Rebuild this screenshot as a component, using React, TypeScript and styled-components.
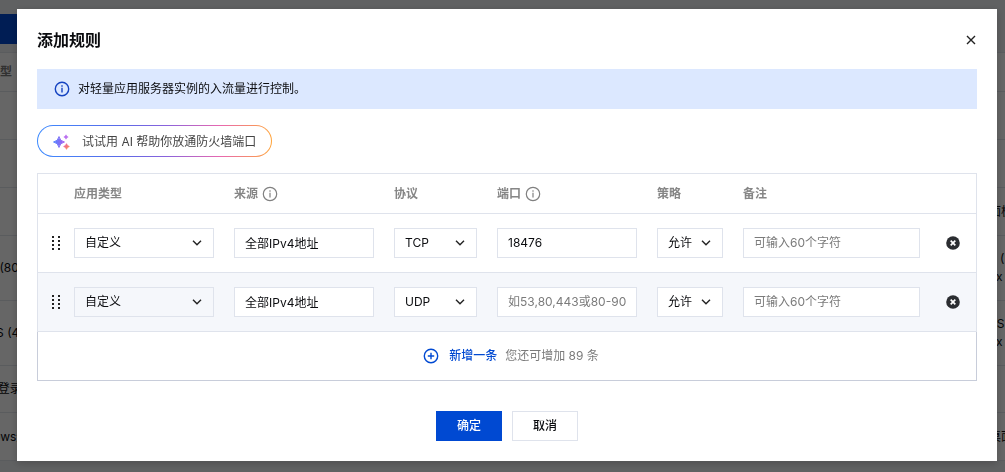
import React from 'react';
import styled, { createGlobalStyle, css } from 'styled-components';

const GlobalStyle = createGlobalStyle`
  *, *::before, *::after { box-sizing: border-box; }
  html, body, #root { height: 100%; }
  body {
    margin: 0;
    overflow: hidden;
    font-family: Inter, "Noto Sans CJK SC", sans-serif;
    font-size: 12px;
    line-height: 18px;
    color: #0b0c0f;
    background: #f0f2f5;
  }
  button, input, select { font: inherit; color: inherit; margin: 0; }
`;

/* ---------- page behind the dialog ---------- */

const Page = styled.div`
  height: 100%;
  overflow: hidden;
  padding-top: 14px;
`;

const PageToolbar = styled.div`
  display: flex;
  margin-bottom: 8px;
`;

const PageButton = styled.button`
  width: 80px;
  height: 30px;
  border: 0;
  background: #0049d2;
`;

const PageTable = styled.table`
  width: calc(100% + 36px);
  margin-left: -36px;
  table-layout: fixed;
  border-collapse: separate;
  border-spacing: 0;
  background: #fff;
`;

const PageCell = styled.td<{ $h: number }>`
  height: ${({ $h }) => $h}px;
  padding: 0;
  border-bottom: 1px solid #e2e5ec;
  vertical-align: middle;
  white-space: pre;
`;

const PageHead = styled.th`
  height: 40px;
  padding: 0;
  border-top: 1px solid #e2e5ec;
  border-bottom: 1px solid #e2e5ec;
  text-align: left;
  font-weight: 700;
  color: #7a7a7a;
`;

const PageLastCol = styled.col`
  width: 16px;
`;

/* ---------- dialog ---------- */

const Backdrop = styled.div`
  position: fixed;
  inset: 0;
  padding: 9px 8px 11px 17px;
  background: rgba(0, 0, 0, 0.6);
`;

const Dialog = styled.section`
  padding: 20px;
  background: #fff;
  box-shadow: 0 2px 8px rgba(0, 0, 0, 0.2);
`;

const DialogHeader = styled.header`
  display: flex;
  align-items: center;
  justify-content: space-between;
  height: 22px;
  margin-bottom: 18px;
`;

const Title = styled.h1`
  margin: 0;
  font-size: 16px;
  line-height: 22px;
  font-weight: 700;
`;

const IconButton = styled.button`
  display: inline-flex;
  align-items: center;
  justify-content: center;
  padding: 0;
  border: 0;
  background: none;
  cursor: pointer;
`;

const Notice = styled.div`
  display: flex;
  align-items: center;
  gap: 8px;
  height: 40px;
  padding: 0 17px;
  background: #dce8ff;
`;

const AiButton = styled.button`
  display: flex;
  align-items: center;
  gap: 12px;
  height: 32px;
  margin: 16px 0;
  padding: 1px 15px 0;
  border: 1px solid transparent;
  border-radius: 16px;
  background:
    linear-gradient(#fff, #fff) padding-box,
    linear-gradient(90deg, #3d8bff 0%, #5a6ae8 35%, #8a63dc 55%, #e868b0 78%, #ffa63d 100%) border-box;
  color: #444;
  cursor: pointer;
`;

const RuleTable = styled.table`
  width: 100%;
  table-layout: fixed;
  border-collapse: separate;
  border-spacing: 0;
  border: 1px solid #dfe3ec;
  border-bottom: 0;
`;

const Col = styled.col<{ $w?: number }>`
  ${({ $w }) => $w && css`width: ${$w}px;`}
`;

const HeadCell = styled.th`
  height: 40px;
  padding: 0 10px;
  border-bottom: 1px solid #dfe3ec;
  text-align: left;
  font-weight: 700;
  color: #868686;
`;

const HeadLabel = styled.span`
  display: flex;
  align-items: center;
  gap: 4px;
`;

const Row = styled.tr<{ $active?: boolean }>`
  background: ${({ $active }) => ($active ? '#f5f7fb' : '#fff')};
`;

const Cell = styled.td<{ $icon?: boolean }>`
  height: 59px;
  padding: ${({ $icon }) => ($icon ? '0' : '0 10px')};
  border-bottom: 1px solid #dfe3ec;
  vertical-align: middle;
`;

const DragButton = styled(IconButton)`
  display: flex;
  width: 100%;
  padding-left: 10px;
  cursor: move;
`;

const RemoveButton = styled(IconButton)`
  display: flex;
  width: 100%;
`;

const field = css`
  display: block;
  width: 100%;
  height: 30px;
  padding: 0 10px;
  border: 1px solid #dfe3ec;
  border-radius: 0;
  outline: 0;
`;

const TextInput = styled.input`
  ${field}
  padding-bottom: 2px;
  background: #fff;
  &::placeholder { color: #7b7b7b; opacity: 1; }
`;

const SelectBox = styled.div`
  position: relative;
`;

const SelectInput = styled.select<{ $plain?: boolean }>`
  ${field}
  appearance: none;
  background: ${({ $plain }) => ($plain ? 'transparent' : '#fff')};
`;

const SelectArrow = styled.span`
  position: absolute;
  top: 0;
  right: 11px;
  height: 30px;
  display: flex;
  align-items: center;
  pointer-events: none;
`;

const AddBar = styled.div`
  display: flex;
  align-items: center;
  justify-content: center;
  gap: 8px;
  height: 49px;
  padding-left: 8px;
  border: 1px solid #c8cdda;
  border-top: 0;
`;

const AddButton = styled(IconButton)`
  gap: 10px;
  color: #0049d2;
  font-weight: 500;
`;

const Hint = styled.span`
  color: #7b7b7b;
`;

const DialogFooter = styled.footer`
  display: flex;
  justify-content: center;
  gap: 10px;
  padding-top: 30px;
`;

const Button = styled.button<{ $primary?: boolean }>`
  min-width: 66px;
  height: 30px;
  padding: 0 20px;
  border: 1px solid ${({ $primary }) => ($primary ? '#0049d2' : '#dfe3ec')};
  background: ${({ $primary }) => ($primary ? '#0049d2' : '#fff')};
  color: ${({ $primary }) => ($primary ? '#fff' : '#0b0c0f')};
  font-weight: 500;
  cursor: pointer;
`;

/* ---------- icons ---------- */

const InfoIcon = ({ color, weight = 1.3 }: { color: string; weight?: number }) => (
  <svg width="16" height="16" viewBox="0 0 16 16" fill="none" stroke={color} strokeWidth={weight} aria-hidden="true">
    <circle cx="8" cy="8" r="6.7" />
    <path d="M8 6.8v4.6M8 4.3v1.5" />
  </svg>
);

const CloseIcon = () => (
  <svg width="12" height="12" viewBox="0 0 12 12" fill="none" stroke="#222" strokeWidth="1.4" aria-hidden="true">
    <path d="M2 2l8 8M10 2l-8 8" />
  </svg>
);

const Chevron = () => (
  <svg width="12" height="12" viewBox="0 0 12 12" fill="none" stroke="#222" strokeWidth="1.4" aria-hidden="true">
    <path d="M2 3.700l4 4 4-4" />
  </svg>
);

const DragIcon = () => (
  <svg width="8" height="14" viewBox="0 0 8 14" fill="#222" aria-hidden="true">
    {[0, 4, 8, 12].map((y) => (
      <g key={y}>
        <rect x="0" y={y} width="2" height="2" />
        <rect x="6" y={y} width="2" height="2" />
      </g>
    ))}
  </svg>
);

const RemoveIcon = () => (
  <svg width="14" height="14" viewBox="0 0 14 14" aria-hidden="true">
    <circle cx="7" cy="7" r="6.800" fill="#2b2d31" />
    <path d="M4.700 4.700l4.600 4.600M9.300 4.700L4.700 9.300" stroke="#fff" strokeWidth="1.700" />
  </svg>
);

const PlusIcon = () => (
  <svg width="16" height="16" viewBox="0 0 16 16" fill="none" stroke="#0049d2" strokeWidth="1.4" aria-hidden="true">
    <circle cx="8" cy="8" r="6.700" />
    <path d="M8 4.800v6.400M4.800 8h6.400" />
  </svg>
);

const SparkIcon = () => (
  <svg width="17" height="16" viewBox="0 0 17 16" aria-hidden="true">
    <defs>
      <linearGradient id="sparkMain" x1="0" y1="0" x2="1" y2="0">
        <stop offset="0" stopColor="#4f82ff" />
        <stop offset="1" stopColor="#a860f0" />
      </linearGradient>
      <linearGradient id="sparkLow" x1="0" y1="0" x2="1" y2="1">
        <stop offset="0" stopColor="#e860b0" />
        <stop offset="1" stopColor="#ff9048" />
      </linearGradient>
    </defs>
    <path d="M6 2.500Q6.900 7.100 11.500 8Q6.900 8.900 6 13.500Q5.100 8.900 .5 8Q5.100 7.100 6 2.500z" fill="url(#sparkMain)" stroke="url(#sparkMain)" strokeWidth=".9" strokeLinejoin="round" />
    <path d="M13 .8Q13.400 2.600 15.200 3Q13.400 3.400 13 5.200Q12.600 3.400 10.800 3Q12.600 2.600 13 .8z" fill="#b566ee" stroke="#b566ee" strokeWidth=".5" />
    <path d="M13.500 9.700Q14 12 16.300 12.500Q14 13 13.500 15.300Q13 13 10.700 12.500Q13 12 13.500 9.700z" fill="url(#sparkLow)" stroke="url(#sparkLow)" strokeWidth=".9" />
  </svg>
);

/* ---------- content ---------- */

const pageRows = [
  { h: 48, name: '', note: '' },
  { h: 48, name: '', note: '' },
  { h: 48, name: '', note: '面板' },
  { h: 65, name: 'HTTP (80)', note: 'P (\nux' },
  { h: 65, name: 'HTTPS (443)', note: 'PS\nux' },
  { h: 47, name: 'Linux 登录', note: '' },
  { h: 48, name: 'Windows登录', note: '桌面' },
];

const rules = [
  { protocol: 'TCP', port: '18476' },
  { protocol: 'UDP', port: '', active: true },
];

const Select = ({ label, value, options, plain }: { label: string; value: string; options: string[]; plain?: boolean }) => (
  <SelectBox>
    <SelectInput aria-label={label} defaultValue={value} $plain={plain}>
      {options.map((o) => (
        <option key={o}>{o}</option>
      ))}
    </SelectInput>
    <SelectArrow>
      <Chevron />
    </SelectArrow>
  </SelectBox>
);

const columns: { label: string; info?: boolean }[] = [
  { label: '应用类型' },
  { label: '来源', info: true },
  { label: '协议' },
  { label: '端口', info: true },
  { label: '策略' },
  { label: '备注' },
];

export default function App() {
  return (
    <>
      <GlobalStyle />
      <Page aria-hidden="true">
        <PageToolbar>
          <PageButton tabIndex={-1} />
        </PageToolbar>
        <PageTable>
          <colgroup>
            <col />
            <PageLastCol />
          </colgroup>
          <thead>
            <tr>
              <PageHead>应用类型</PageHead>
              <PageHead />
            </tr>
          </thead>
          <tbody>
            {pageRows.map((r, i) => (
              <tr key={i}>
                <PageCell $h={r.h}>{r.name}</PageCell>
                <PageCell $h={r.h}>{r.note}</PageCell>
              </tr>
            ))}
          </tbody>
        </PageTable>
      </Page>

      <Backdrop>
        <Dialog role="dialog" aria-modal="true" aria-labelledby="dialog-title">
          <DialogHeader>
            <Title id="dialog-title">添加规则</Title>
            <IconButton type="button" aria-label="关闭">
              <CloseIcon />
            </IconButton>
          </DialogHeader>

          <Notice>
            <InfoIcon color="#1442c0" weight={1.4} />
            对轻量应用服务器实例的入流量进行控制。
          </Notice>

          <AiButton type="button">
            <SparkIcon />
            试试用 AI 帮助你放通防火墙端口
          </AiButton>

          <RuleTable>
            <colgroup>
              <Col $w={26} />
              <Col $w={160} />
              <Col $w={160} />
              <Col $w={103} />
              <Col $w={160} />
              <Col $w={86} />
              <Col />
              <Col $w={46} />
            </colgroup>
            <thead>
              <tr>
                <HeadCell />
                {columns.map((c) => (
                  <HeadCell key={c.label} scope="col">
                    <HeadLabel>
                      {c.label}
                      {c.info && <InfoIcon color="#808080" weight={1.2} />}
                    </HeadLabel>
                  </HeadCell>
                ))}
                <HeadCell />
              </tr>
            </thead>
            <tbody>
              {rules.map((r) => (
                <Row key={r.protocol} $active={r.active}>
                  <Cell $icon>
                    <DragButton type="button" aria-label="拖动排序">
                      <DragIcon />
                    </DragButton>
                  </Cell>
                  <Cell>
                    <Select label="应用类型" value="自定义" options={['自定义']} plain={r.active} />
                  </Cell>
                  <Cell>
                    <TextInput aria-label="来源" defaultValue="全部IPv4地址" />
                  </Cell>
                  <Cell>
                    <Select label="协议" value={r.protocol} options={['TCP', 'UDP']} />
                  </Cell>
                  <Cell>
                    <TextInput aria-label="端口" defaultValue={r.port} placeholder="如53,80,443或80-90" />
                  </Cell>
                  <Cell>
                    <Select label="策略" value="允许" options={['允许']} />
                  </Cell>
                  <Cell>
                    <TextInput aria-label="备注" placeholder="可输入60个字符" />
                  </Cell>
                  <Cell $icon>
                    <RemoveButton type="button" aria-label="删除">
                      <RemoveIcon />
                    </RemoveButton>
                  </Cell>
                </Row>
              ))}
            </tbody>
          </RuleTable>
          <AddBar>
            <AddButton type="button">
              <PlusIcon />
              新增一条
            </AddButton>
            <Hint>您还可增加 89 条</Hint>
          </AddBar>

          <DialogFooter>
            <Button type="button" $primary>
              确定
            </Button>
            <Button type="button">取消</Button>
          </DialogFooter>
        </Dialog>
      </Backdrop>
    </>
  );
}
